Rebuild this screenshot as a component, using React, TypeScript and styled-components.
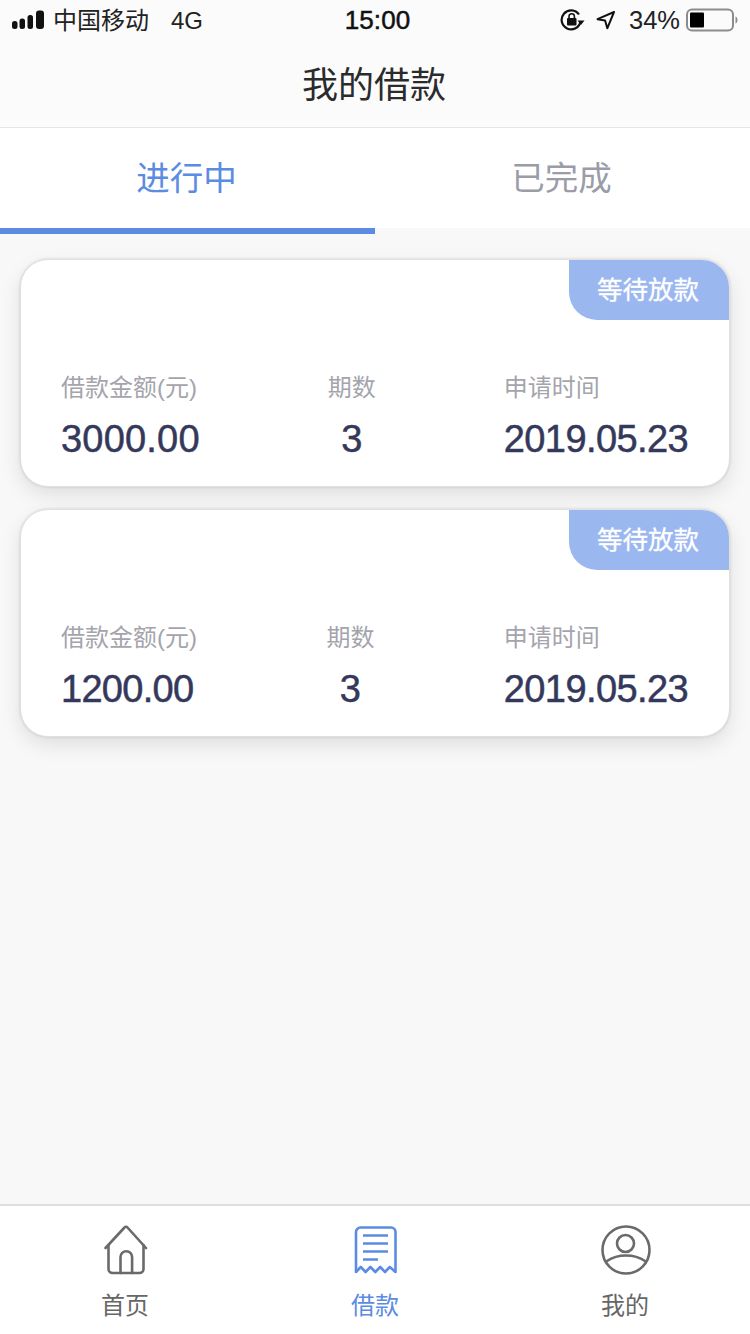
import React, {FC, useState} from 'react';
import styled, {createGlobalStyle} from 'styled-components';

const FONT = '"Liberation Sans", "Noto Sans CJK SC", sans-serif';
const BLUE = '#5b8be2';

const GlobalStyle = createGlobalStyle`
    html, body {
        margin: 0;
        padding: 0;
        background: #f8f8f8;
    }
    body {
        font-family: ${FONT};
    }
    * {
        box-sizing: border-box;
    }
`;

const Page = styled.div`
    width: 750px;
    height: 1334px;
    display: flex;
    flex-direction: column;
    overflow: hidden;
    background: #f8f8f8;
`;

const StatusBar = styled.div`
    height: 40px;
    padding: 0 12px;
    display: grid;
    grid-template-columns: 1fr auto 1fr;
    align-items: center;
    background: #fbfbfb;
    color: #111;
    font-size: 24px;
`;

const StatusGroup = styled.div<{$right?: boolean}>`
    display: flex;
    align-items: center;
    justify-content: ${(props) => (props.$right ? 'flex-end' : 'flex-start')};
`;

const Carrier = styled.span`
    margin-left: 7px;
    padding-bottom: 4px;
    color: #222;
`;

const Network = styled.span`
    margin-left: 22px;
    padding-top: 2px;
    color: #222;
`;

const Clock = styled.span`
    margin-left: 5px;
    font-size: 26px;
    font-weight: 400;
    letter-spacing: 0.1px;
    -webkit-text-stroke: 0.5px #111;
`;

const Percent = styled.span`
    margin: 0 6px 0 13px;
    padding-top: 1px;
    font-size: 25.500px;
    color: #222;
`;

const Header = styled.div`
    height: 88px;
    padding: 0 2px 4px 0;
    display: flex;
    align-items: center;
    justify-content: center;
    background: #fbfbfb;
    border-bottom: 1px solid #e6e6e6;
    color: #2b2b2b;
    font-size: 36px;
`;

const TabBar = styled.div`
    display: flex;
`;

const Tab = styled.div<{$active?: boolean}>`
    flex: 1;
    height: 106px;
    display: flex;
    align-items: center;
    justify-content: center;
    font-size: 33.500px;
    color: ${(props) => (props.$active ? BLUE : '#9a9ca8')};
    background: #fff;
    background-clip: content-box;
    border-bottom: 6px solid ${(props) => (props.$active ? BLUE : 'transparent')};
    cursor: pointer;
`;

const TabLabel = styled.span`
    margin: 0 2px 6px 0;
`;

const Main = styled.div`
    flex: 1;
    padding: 25px 20px 0;
    display: flex;
    flex-direction: column;
    gap: 22px;
`;

const Card = styled.div`
    position: relative;
    height: 228px;
    padding: 111px 41px 0 40px;
    display: flex;
    justify-content: space-between;
    align-items: flex-start;
    background: #fff;
    border: 1px solid #e0e0e0;
    border-radius: 28px;
    box-shadow: 0 0 3px rgba(0, 0, 0, 0.14), 0 8px 20px rgba(0, 0, 0, 0.1);
`;

const Badge = styled.div`
    position: absolute;
    top: 0;
    right: 0;
    width: 160px;
    height: 60px;
    padding: 0 2px 6px 0;
    display: flex;
    align-items: center;
    justify-content: center;
    background: #9bb7f0;
    border-radius: 0 27px 0 28px;
    color: #fff;
    font-size: 25.500px;
    -webkit-text-stroke: 0.3px #fff;
`;

const Stat = styled.div<{$center?: boolean}>`
    display: flex;
    flex-direction: column;
    align-items: ${(props) => (props.$center ? 'center' : 'flex-start')};
`;

const StatLabel = styled.div`
    height: 34px;
    line-height: 34px;
    font-size: 24px;
    color: #a4a4ac;
`;

const StatValue = styled.div<{$tracking?: number}>`
    margin-top: 11px;
    height: 46px;
    line-height: 46px;
    font-size: 38px;
    color: #34385a;
    letter-spacing: ${(props) => props.$tracking || 0}px;
    -webkit-text-stroke: 0.5px #34385a;
`;

const Footer = styled.div`
    height: 130px;
    padding-top: 19px;
    display: grid;
    grid-template-columns: repeat(3, 1fr);
    background: #fff;
    border-top: 2px solid #dedede;
`;

const NavItem = styled.div<{$active?: boolean}>`
    display: flex;
    flex-direction: column;
    align-items: center;
    color: ${(props) => (props.$active ? BLUE : '#666')};
    cursor: pointer;
`;

const NavIcon = styled.svg`
    display: block;
    width: 50px;
    height: 50px;
    margin-left: 2px;
`;

const NavLabel = styled.div`
    margin-top: 14px;
    height: 34px;
    line-height: 34px;
    font-size: 24px;
`;

const LocationGlyph = styled.svg`
    margin-left: 10px;
`;

const SignalIcon: FC = () => (
    <svg width='34' height='20' viewBox='0 0 34 20'>
        <rect x='0' y='11' width='5.500' height='8' rx='2.500' fill='#111'/>
        <rect x='7.500' y='8.500' width='5.500' height='10.500' rx='2.500' fill='#111'/>
        <rect x='15.500' y='5' width='5.500' height='14' rx='2.500' fill='#111'/>
        <rect x='24' y='0.500' width='8' height='18.500' rx='3' fill='#111'/>
    </svg>
);

const RotationLockIcon: FC = () => (
    <svg width='26' height='24' viewBox='0 0 26 24'>
        <path d='M20.500 13.500A9.500 9.500 0 1 1 19 6.500' fill='none' stroke='#111' strokeWidth='2.200'/>
        <path d='M17.500 12.500h7l-3.500 4.500z' fill='#111'/>
        <rect x='7' y='10' width='9.500' height='7.500' rx='1' fill='#111'/>
        <path d='M9 10.500V8.500a2.700 2.700 0 0 1 5.400 0v2' fill='none' stroke='#111' strokeWidth='1.600'/>
    </svg>
);

const LocationIcon: FC = () => (
    <LocationGlyph width='20' height='20' viewBox='0 0 20 20'>
        <path d='M18 2L1.500 9.200l7.600 1.400 2.200 7.700z' fill='none' stroke='#111' strokeWidth='2' strokeLinejoin='round'/>
    </LocationGlyph>
);

const BatteryIcon: FC = () => (
    <svg width='52' height='24' viewBox='0 0 52 24'>
        <rect x='1' y='1.500' width='46' height='21' rx='5' fill='none' stroke='#8c8c8c' strokeWidth='2'/>
        <rect x='4' y='4.500' width='14' height='15' rx='1' fill='#000'/>
        <path d='M49.500 8.500c1.500 0.500 2 2 2 3.500s-0.500 3-2 3.500z' fill='#8c8c8c'/>
    </svg>
);

const HomeIcon: FC = () => (
    <NavIcon viewBox='0 0 50 50' fill='none' stroke='#6a6a6a' strokeWidth='2.600' strokeLinecap='round' strokeLinejoin='round'>
        <path d='M4.500 23L23.500 2.500a2 2 0 0 1 3 0L45 23'/>
        <path d='M7.500 20V44a4 4 0 0 0 4 4H38.500a4 4 0 0 0 4-4V20'/>
        <path d='M19.500 48V32a5.800 5.800 0 0 1 11.600 0V48'/>
    </NavIcon>
);

const ReceiptIcon: FC = () => (
    <NavIcon viewBox='0 0 50 50' fill='none' stroke={BLUE} strokeWidth='2.600'>
        <path d='M5 47V7a4.500 4.500 0 0 1 4.500-4.500H40a4.500 4.500 0 0 1 4.500 4.500V47' strokeLinecap='round'/>
        <path d='M5 47l4.800-5 4.800 5 4.800-5 4.900 5 4.900-5 4.800 5 4.800-5 5.700 5' strokeLinejoin='round'/>
        <path d='M12 10.500H37M12 18.500H37M12 26.500H37M12 34.500H27' strokeWidth='2.400'/>
    </NavIcon>
);

const UserIcon: FC = () => (
    <NavIcon viewBox='0 0 50 50' fill='none' stroke='#6a6a6a' strokeWidth='2.600' strokeLinecap='round'>
        <circle cx='25' cy='25' r='23.500'/>
        <circle cx='24.500' cy='18.500' r='8.500'/>
        <path d='M6 36Q14 30.500 25 30.500T44 36'/>
    </NavIcon>
);

interface Loan {
    amount: string;
    amountTracking?: number;
    periods: string;
    date: string;
}

const loans: Loan[] = [
    {amount: '3000.00', amountTracking: 0.2, periods: '3', date: '2019.05.23'},
    {amount: '1200.00', amountTracking: -0.7, periods: '3', date: '2019.05.23'},
];

const LoanCard: FC<{loan: Loan}> = ({loan}) => (
    <Card>
        <Badge>{'等待放款'}</Badge>
        <Stat>
            <StatLabel>{'借款金额(元)'}</StatLabel>
            <StatValue $tracking={loan.amountTracking}>{loan.amount}</StatValue>
        </Stat>
        <Stat $center={true}>
            <StatLabel>{'期数'}</StatLabel>
            <StatValue>{loan.periods}</StatValue>
        </Stat>
        <Stat>
            <StatLabel>{'申请时间'}</StatLabel>
            <StatValue $tracking={-0.6}>{loan.date}</StatValue>
        </Stat>
    </Card>
);

const App: FC = () => {
    const [tab, setTab] = useState(0);

    return (
        <Page>
            <GlobalStyle/>
            <StatusBar>
                <StatusGroup>
                    <SignalIcon/>
                    <Carrier>{'中国移动'}</Carrier>
                    <Network>{'4G'}</Network>
                </StatusGroup>
                <Clock>{'15:00'}</Clock>
                <StatusGroup $right={true}>
                    <RotationLockIcon/>
                    <LocationIcon/>
                    <Percent>{'34%'}</Percent>
                    <BatteryIcon/>
                </StatusGroup>
            </StatusBar>
            <Header>{'我的借款'}</Header>
            <TabBar>
                <Tab $active={tab === 0} onClick={() => setTab(0)}>
                    <TabLabel>{'进行中'}</TabLabel>
                </Tab>
                <Tab $active={tab === 1} onClick={() => setTab(1)}>
                    <TabLabel>{'已完成'}</TabLabel>
                </Tab>
            </TabBar>
            <Main>
                {loans.map((loan) => (
                    <LoanCard key={loan.amount} loan={loan}/>
                ))}
            </Main>
            <Footer>
                <NavItem>
                    <HomeIcon/>
                    <NavLabel>{'首页'}</NavLabel>
                </NavItem>
                <NavItem $active={true}>
                    <ReceiptIcon/>
                    <NavLabel>{'借款'}</NavLabel>
                </NavItem>
                <NavItem>
                    <UserIcon/>
                    <NavLabel>{'我的'}</NavLabel>
                </NavItem>
            </Footer>
        </Page>
    );
};

export default App;
